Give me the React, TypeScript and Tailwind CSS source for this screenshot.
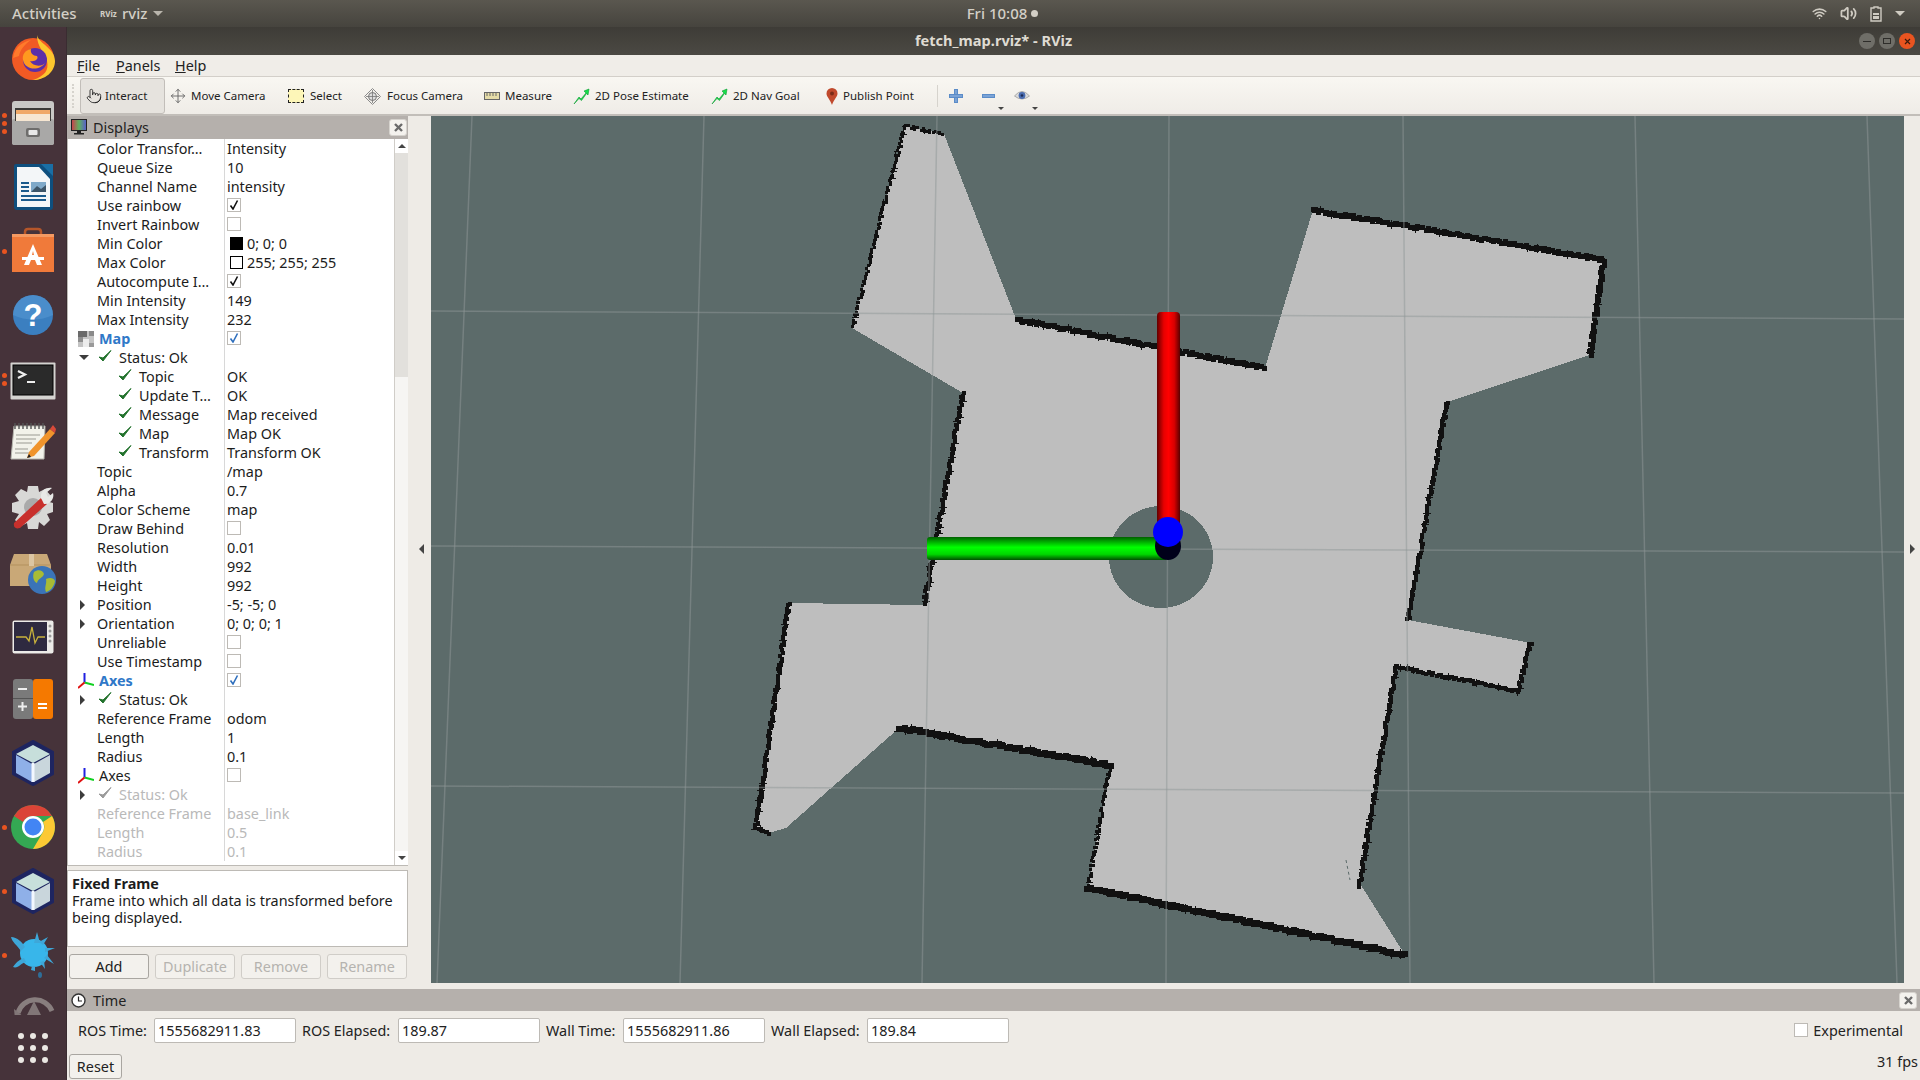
import { ReactNode } from "react";
import { Pointer, Move, Wifi, Volume2 } from "lucide-react";

type Row = {
  name: string;
  value?: string;
  indent?: 0 | 1 | 2;
  arrow?: "right" | "down";
  status?: boolean;
  icon?: "map" | "axes";
  blue?: boolean;
  off?: boolean;
  check?: boolean;
  swatch?: string;
};

const rows: Row[] = [
  { name: "Color Transfor…", value: "Intensity" },
  { name: "Queue Size", value: "10" },
  { name: "Channel Name", value: "intensity" },
  { name: "Use rainbow", check: true },
  { name: "Invert Rainbow", check: false },
  { name: "Min Color", value: "0; 0; 0", swatch: "bg-black" },
  { name: "Max Color", value: "255; 255; 255", swatch: "bg-white" },
  { name: "Autocompute I…", check: true },
  { name: "Min Intensity", value: "149" },
  { name: "Max Intensity", value: "232" },
  { name: "Map", icon: "map", blue: true, check: true },
  { name: "Status: Ok", indent: 1, arrow: "down", status: true },
  { name: "Topic", value: "OK", indent: 2, status: true },
  { name: "Update T…", value: "OK", indent: 2, status: true },
  { name: "Message", value: "Map received", indent: 2, status: true },
  { name: "Map", value: "Map OK", indent: 2, status: true },
  { name: "Transform", value: "Transform OK", indent: 2, status: true },
  { name: "Topic", value: "/map" },
  { name: "Alpha", value: "0.7" },
  { name: "Color Scheme", value: "map" },
  { name: "Draw Behind", check: false },
  { name: "Resolution", value: "0.01" },
  { name: "Width", value: "992" },
  { name: "Height", value: "992" },
  { name: "Position", value: "-5; -5; 0", arrow: "right" },
  { name: "Orientation", value: "0; 0; 0; 1", arrow: "right" },
  { name: "Unreliable", check: false },
  { name: "Use Timestamp", check: false },
  { name: "Axes", icon: "axes", blue: true, check: true },
  { name: "Status: Ok", indent: 1, arrow: "right", status: true },
  { name: "Reference Frame", value: "odom" },
  { name: "Length", value: "1" },
  { name: "Radius", value: "0.1" },
  { name: "Axes", icon: "axes", check: false },
  { name: "Status: Ok", indent: 1, arrow: "right", status: true, off: true },
  { name: "Reference Frame", value: "base_link", off: true },
  { name: "Length", value: "0.5", off: true },
  { name: "Radius", value: "0.1", off: true },
];

const floor: [number, number][] = [
  [905, 126], [944, 134], [1016, 319], [1265, 368], [1313, 210], [1604, 260], [1590, 355], [1447, 402],
  [1408, 620], [1531, 643], [1518, 691], [1396, 667], [1359, 882], [1405, 955], [1088, 888], [1110, 765],
  [899, 728], [786, 828], [769, 833], [756, 828], [789, 603], [924, 605], [963, 393], [852, 328],
];

// [points, wall thickness]
const walls: [[number, number][], number][] = [
  [[[853, 325], [905, 126], [944, 134]], 3],
  [[[1018, 320], [1265, 368]], 5],
  [[[1313, 210], [1604, 260], [1590, 355]], 5],
  [[[1447, 402], [1408, 620]], 4],
  [[[1531, 643], [1518, 691], [1396, 667], [1359, 887]], 4],
  [[[1405, 955], [1088, 888]], 6],
  [[[1088, 888], [1110, 765]], 3],
  [[[1110, 765], [899, 728]], 6],
  [[[769, 833], [756, 828], [789, 603]], 4],
  [[[963, 393], [924, 605]], 4],
];

// little pixel blocks along each wall, so it looks like an occupancy grid
const wallPath = () => {
  let d = "";
  let n = 7;
  for (const [w, t] of walls) {
    for (let i = 0; i < w.length - 1; i++) {
      const [x0, y0] = w[i];
      const [x1, y1] = w[i + 1];
      const len = Math.hypot(x1 - x0, y1 - y0);
      for (let s = 0; s < len; s += 2) {
        n = (n * 137 + 59) % 1009;
        const jx = (n % 3) - 1;
        const jy = ((n >> 2) % 3) - 1;
        const x = Math.round(x0 + ((x1 - x0) * s) / len + jx - t / 2);
        const y = Math.round(y0 + ((y1 - y0) * s) / len + jy - t / 2);
        d += `M${x} ${y}h${t}v${t}h-${t}z`;
        if (n % 11 === 0) d += `M${x - 2} ${y + t - 1}h${t + 4}v1h-${t + 4}z`;
        if (n % 13 === 0) d += `M${x + 1} ${y - 2}h1v${t + 4}h-1z`;
      }
    }
  }
  return d;
};

const Tick = ({ off }: { off?: boolean }) => (
  <svg width="14" height="14" viewBox="0 0 14 14">
    <path d="M1 8 L5 12 L13 1.5 L5 9 Z" fill={off ? "#9a9a9a" : "#22722c"} stroke={off ? "#9a9a9a" : "#22722c"} strokeWidth="1" strokeLinejoin="round" />
  </svg>
);

const MapIcon = () => (
  <svg width="16" height="16" viewBox="0 0 16 16" shapeRendering="crispEdges">
    <rect width="16" height="16" fill="#c4c4c4" />
    <rect width="9" height="6" fill="#6a6a6a" />
    <rect x="11" width="5" height="5" fill="#8a8a8a" />
    <rect y="6" width="5" height="5" fill="#8f8f8f" />
    <rect x="5" y="8" width="6" height="8" fill="#ededed" />
    <rect x="11" y="12" width="5" height="4" fill="#9a9a9a" />
  </svg>
);

const AxesIcon = () => (
  <svg width="16" height="16" viewBox="0 0 16 16">
    <path d="M6.5 9.5 V0" stroke="#2020e0" strokeWidth="2" />
    <path d="M6.5 9.5 L16 12" stroke="#10d020" strokeWidth="2" />
    <path d="M6.5 9.5 L0 15" stroke="#e01010" strokeWidth="2" />
  </svg>
);

const Check = ({ on, blue }: { on: boolean; blue?: boolean }) => (
  <div className="w-[14px] h-[14px] border border-[#bdbab5] bg-white flex items-center justify-center">
    {on && (
      <svg width="10" height="10" viewBox="0 0 10 10">
        <path d="M1.5 5.5 L4 9 L8.5 0.5" fill="none" stroke={blue ? "#2f6fbd" : "#111"} strokeWidth="1.6" />
      </svg>
    )}
  </div>
);

const TreeRow = ({ row }: { row: Row }) => {
  const indent = row.indent ?? 0;
  const textColor = row.off ? "text-[#b9b9b9]" : row.blue ? "text-[#2f78c8] font-bold" : "text-[#1c1c1c]";
  return (
    <div className="h-[19px] flex items-center">
      <div className="w-[156px] h-full flex items-center relative shrink-0">
        {row.arrow && (
          <div className="absolute left-[12px] top-[5px]">
            {row.arrow === "right" ? (
              <div className="w-0 h-0 border-y-[5px] border-y-transparent border-l-[5px] border-l-[#3c3c3c]" />
            ) : (
              <div className="mt-[2px] -ml-[1px] w-0 h-0 border-x-[5px] border-x-transparent border-t-[5px] border-t-[#3c3c3c]" />
            )}
          </div>
        )}
        {row.icon && (
          <div className="absolute left-[10px] top-[2px]">{row.icon === "map" ? <MapIcon /> : <AxesIcon />}</div>
        )}
        {row.status && (
          <div className={indent === 2 ? "absolute left-[50px] top-[1px]" : "absolute left-[30px] top-[1px]"}>
            <Tick off={row.off} />
          </div>
        )}
        <span
          className={`whitespace-nowrap ${textColor} ${
            indent === 2 ? "pl-[71px]" : indent === 1 ? "pl-[51px]" : row.icon ? "pl-[31px]" : "pl-[29px]"
          }`}
        >
          {row.name}
        </span>
      </div>
      <div className={`h-full flex items-center border-l border-[#d8d8d8] pl-[2px] flex-1 whitespace-nowrap ${row.off ? "text-[#b9b9b9]" : "text-[#1c1c1c]"}`}>
        {row.check !== undefined && (
          <div className="-mt-[2px]">
            <Check on={row.check} blue={row.blue} />
          </div>
        )}
        {row.swatch && <div className={`w-[13px] h-[13px] ml-[3px] mr-[4px] border border-black ${row.swatch}`} />}
        {row.value && <span>{row.value}</span>}
      </div>
    </div>
  );
};

const CloseBtn = () => (
  <div className="w-[18px] h-[17px] rounded-[3px] bg-[#f4f2ee] border border-[#d6d3ce] flex items-center justify-center">
    <svg width="9" height="9" viewBox="0 0 9 9">
      <path d="M1 1 L8 8 M8 1 L1 8" stroke="#6a6a6a" strokeWidth="2.4" />
    </svg>
  </div>
);

const Tool = ({ icon, label, cls }: { icon: ReactNode; label: string; cls: string }) => (
  <div className={`h-full flex items-center pl-[4px] shrink-0 whitespace-nowrap text-[11.5px] text-[#222] ${cls}`}>
    <div className="w-[17px] h-[17px] flex items-center justify-center shrink-0">{icon}</div>
    <span>{label}</span>
  </div>
);

const ArrowIcon = () => (
  <svg width="17" height="17" viewBox="0 0 17 17">
    <path d="M1 16 L6 9 L8 11 L13 5 L11 3 L16 1 L15 7 L13.5 5.5 L8.5 12.5 L6 10.5 Z" fill="#15e04a" stroke="#0c9a30" strokeWidth="0.6" />
  </svg>
);

const PanelBtn = ({ label, disabled }: { label: string; disabled?: boolean }) => (
  <div
    className={`w-[80px] h-[25px] rounded-[3px] border flex items-center justify-center bg-[#f3f1ed] ${
      disabled ? "border-[#d0cdc8] text-[#b5b3af]" : "border-[#a9a6a1] text-[#1c1c1c]"
    }`}
  >
    {label}
  </div>
);

const TimeField = ({ label, value, cls }: { label: string; value: string; cls: string }) => (
  <div className={`flex items-center shrink-0 ${cls}`}>
    <span className="flex-1 whitespace-nowrap text-[#222]">{label}</span>
    <div className="w-[142px] h-[25px] bg-white border border-[#bdbab5] rounded-[2px] flex items-center pl-[3px] text-[#222]">
      {value}
    </div>
  </div>
);

const Dots = ({ n }: { n: number }) => (
  <div className="absolute left-[2px] top-0 bottom-0 flex flex-col justify-center gap-[3px]">
    {Array.from({ length: n }).map((_, i) => (
      <div key={i} className="w-[5px] h-[5px] rounded-full bg-[#e95420]" />
    ))}
  </div>
);

const Cube = () => (
  <svg width="48" height="48" viewBox="0 0 48 48">
    <path d="M24 2 L44 13 V35 L24 46 L4 35 V13 Z" fill="#1e2560" stroke="#1e2560" strokeWidth="2" strokeLinejoin="round" />
    <path d="M24 6 L41 15 L24 24 L7 15 Z" fill="#c7dfdb" />
    <path d="M7 16 L23 25 V43 L7 34 Z" fill="#8fb0e8" />
    <path d="M25 25 L41 16 V34 L25 43 Z" fill="#c9d6dc" />
    <path d="M24 24 V43" stroke="#f2f7ff" strokeWidth="3" />
  </svg>
);

const dockIcons: { dots: number; svg: ReactNode }[] = [
  {
    dots: 0,
    svg: (
      <svg className="-translate-y-[1px]" width="48" height="48" viewBox="0 0 48 48">
        <circle cx="24" cy="25" r="21" fill="#f15a24" />
        <path d="M28 1 C30 10 46 14 46 27 C46 38 36 46 24 46 C36 42 40 36 38 27 C36 18 28 14 28 1 Z" fill="#fdc62e" />
        <circle cx="26" cy="26" r="12" fill="#5b2fa8" />
        <path d="M14 26 C16 36 30 38 37 28 C34 33 24 33 21 27 C26 28 30 25 28 22 C24 22 21 19 22 15 C16 16 13 21 14 26 Z" fill="#ff9a1f" />
        <path d="M4 24 C6 12 14 8 22 6 C16 10 11 16 10 22 Z" fill="#ff7a2b" />
      </svg>
    ),
  },
  {
    dots: 3,
    svg: (
      <svg width="44" height="46" viewBox="0 0 44 46">
        <rect x="1" y="1" width="42" height="44" rx="3" fill="#c9c8c6" />
        <rect x="1" y="19" width="42" height="26" rx="2" fill="#a9a8a7" />
        <rect x="4" y="8" width="36" height="13" fill="#3c3a38" />
        <rect x="5" y="10" width="34" height="4" fill="#f0a868" />
        <rect x="5" y="14" width="34" height="7" fill="#f6e6d2" />
        <rect x="15" y="28" width="14" height="9" rx="2" fill="#6e6d6c" />
        <rect x="17.5" y="30" width="9" height="5" rx="1" fill="#e8e8e8" />
      </svg>
    ),
  },
  {
    dots: 0,
    svg: (
      <svg width="42" height="48" viewBox="0 0 42 48">
        <path d="M2 3 Q2 1 4 1 H40 Q41 1 41 3 V44 Q41 47 38 47 H5 Q2 47 2 44 Z" fill="#0e4f7e" />
        <path d="M5 4 H27 L38 16 V44 H5 Z" fill="#f3f6f8" />
        <path d="M29 1 H41 V13 Z" fill="#1a6fa5" />
        <rect x="9" y="19" width="8" height="2" fill="#1a5a8c" />
        <rect x="9" y="23" width="8" height="2" fill="#1a5a8c" />
        <rect x="9" y="27" width="8" height="2" fill="#1a5a8c" />
        <rect x="19" y="19" width="15" height="10" fill="#7fa9c9" />
        <path d="M19 29 L25 23 L29 26 L34 22 V29 Z" fill="#3d5568" />
        <rect x="9" y="32" width="25" height="2" fill="#1a5a8c" />
        <rect x="9" y="36" width="25" height="2" fill="#1a5a8c" />
      </svg>
    ),
  },
  {
    dots: 1,
    svg: (
      <svg className="-translate-y-[1px]" width="44" height="46" viewBox="0 0 44 46">
        <path d="M14 12 V5 Q14 2 17 2 H27 Q30 2 30 5 V12" fill="none" stroke="#b5562a" strokeWidth="2.5" />
        <rect x="1" y="7" width="42" height="38" fill="#f07a3a" />
        <rect x="1" y="7" width="42" height="3" fill="#f59a62" />
        <path d="M22 17 L31 38 H26 L24 33 H20 L18 38 H13 Z M21 28 H23 L22 24 Z" fill="#fff" />
        <rect x="11" y="30" width="22" height="3" fill="#fff" />
      </svg>
    ),
  },
  {
    dots: 0,
    svg: (
      <svg width="42" height="42" viewBox="0 0 42 42">
        <circle cx="21" cy="21" r="20" fill="#3b7fc0" />
        <path d="M1 21 A20 20 0 0 1 41 21 Q21 30 1 21 Z" fill="#5a9bd5" opacity="0.5" />
        <text x="21" y="32" textAnchor="middle" fontFamily="Liberation Sans" fontWeight="700" fontSize="31" fill="#fff">?</text>
      </svg>
    ),
  },
  {
    dots: 2,
    svg: (
      <svg className="translate-y-[2px]" width="46" height="38" viewBox="0 0 46 38">
        <rect x="0.5" y="0.5" width="45" height="37" rx="1" fill="#d4d3d0" />
        <rect x="3" y="3" width="40" height="30" fill="#2a2a2a" stroke="#000" />
        <path d="M8 9 L15 12.5 L8 16" fill="none" stroke="#eee" strokeWidth="2.2" />
        <rect x="17" y="19" width="8" height="2" fill="#eee" />
      </svg>
    ),
  },
  {
    dots: 0,
    svg: (
      <svg width="46" height="44" viewBox="0 0 46 44">
        <path d="M4 5 H35 L34 38 H1 Z" fill="#f2f2ea" stroke="#b5b5ad" />
        <path d="M5 2 V8 M9 2 V8 M13 2 V8 M17 2 V8 M21 2 V8 M25 2 V8 M29 2 V8 M33 2 V8" stroke="#555" strokeWidth="1.4" />
        <path d="M6 14 H30 M6 18 H26 M6 22 H22 M5 28 H18 M5 32 H22" stroke="#9a9a92" strokeWidth="1.2" />
        <path d="M19 31 L40 8 L45 12 L24 35 L17 37 Z" fill="#f0942c" />
        <path d="M40 8 L43 4 L46 8 L45 12 Z" fill="#d84a3a" />
        <path d="M19 33 L17 37 L21 36 Z" fill="#222" />
      </svg>
    ),
  },
  {
    dots: 0,
    svg: (
      <svg width="46" height="46" viewBox="0 0 46 46">
        <path d="M18 2 H28 L29 8 L35 5 L41 12 L36 17 L43 19 V28 L37 30 L40 36 L34 42 L29 38 L28 45 H18 L17 39 L11 42 L5 36 L9 30 L2 28 V19 L9 17 L5 11 L11 5 L17 8 Z" fill="#d8d8d6" />
        <circle cx="23" cy="23" r="9" fill="#aaa" />
        <path d="M4 39 L31 14 L37 20 L10 44 Q3 46 4 39 Z" fill="#c8302c" />
        <path d="M31 14 C30 6 37 3 42 4 L36 9 L38 13 L43 9 C45 15 39 21 34 20 Z" fill="#e8e8e6" />
      </svg>
    ),
  },
  {
    dots: 0,
    svg: (
      <svg className="translate-y-[3px]" width="46" height="42" viewBox="0 0 46 42">
        <path d="M4 1 H37 L41 12 V33 H0 V12 Z" fill="#c9a877" />
        <path d="M0 12 H41" stroke="#b3915f" />
        <rect x="19" y="1" width="5" height="12" fill="#dcc6a3" />
        <circle cx="32" cy="27" r="14" fill="#3a74b8" />
        <path d="M24 19 C28 16 33 17 34 21 C33 25 28 25 27 30 C24 29 22 24 24 19 Z M36 26 C40 24 44 25 45 28 C44 34 40 38 36 39 C34 34 37 31 36 26 Z" fill="#a8bb35" />
      </svg>
    ),
  },
  {
    dots: 0,
    svg: (
      <svg className="translate-y-[2px]" width="42" height="34" viewBox="0 0 42 34">
        <rect x="0.5" y="0.5" width="41" height="33" rx="2" fill="#ecebe8" />
        <rect x="2" y="2" width="33" height="29" fill="#2e2a40" />
        <path d="M4 17 H14 L17 21 L20 7 L23 23 L26 17 H33" fill="none" stroke="#c7b13c" strokeWidth="1.3" />
        <circle cx="38" cy="6" r="1.5" fill="#999" />
        <circle cx="38" cy="11" r="1.5" fill="#999" />
        <circle cx="38" cy="16" r="1.5" fill="#999" />
        <circle cx="38" cy="21" r="1.5" fill="#999" />
      </svg>
    ),
  },
  {
    dots: 0,
    svg: (
      <svg width="40" height="40" viewBox="0 0 40 40">
        <rect width="20" height="40" fill="#7a7a7a" rx="3" />
        <rect x="20" width="20" height="40" fill="#f57900" rx="3" />
        <rect y="19" width="20" height="1" fill="#555" />
        <rect x="5" y="9" width="9" height="2" fill="#eee" />
        <path d="M9.5 23 V32 M5 27.5 H14" stroke="#eee" strokeWidth="2" />
        <path d="M25 25 H34 M25 29 H34" stroke="#fff" strokeWidth="2" />
      </svg>
    ),
  },
  { dots: 0, svg: <Cube /> },
  {
    dots: 1,
    svg: (
      <svg width="46" height="46" viewBox="0 0 46 46">
        <circle cx="23" cy="23" r="22" fill="#34a853" />
        <path d="M23 1 A22 22 0 0 1 42 12 H23 A11 11 0 0 0 13 18 L4 12 A22 22 0 0 1 23 1 Z" fill="#db4437" />
        <path d="M42 12 A22 22 0 0 1 23 45 L33 28 A11 11 0 0 0 33 18 Z" fill="#fcc934" />
        <circle cx="23" cy="23" r="11" fill="#fff" />
        <circle cx="23" cy="23" r="8.5" fill="#4285f4" />
      </svg>
    ),
  },
  { dots: 1, svg: <Cube /> },
  {
    dots: 1,
    svg: (
      <svg width="48" height="48" viewBox="0 0 48 48">
        <circle cx="25" cy="22" r="14" fill="#38b6ea" />
        <path d="M2 6 C8 6 14 12 16 16 L12 20 C8 14 3 11 2 6 Z M28 1 L31 12 L25 12 Z M39 6 L34 14 L30 11 Z M46 17 L36 21 L36 17 Z M45 33 L35 27 L38 24 Z M36 38 L31 31 L35 30 Z M4 36 C8 30 12 28 15 27 L17 31 C12 32 9 38 4 36 Z M23 35 L26 35 L26 40 L22 39 Z" fill="#3ea7d8" />
        <ellipse cx="31" cy="44" rx="2" ry="3" fill="#2e6e98" />
      </svg>
    ),
  },
];

export default function App() {
  return (
    <div className="w-[1920px] h-[1080px] overflow-hidden flex flex-col font-['Noto_Sans',sans-serif] text-[14.4px] bg-[#eeebe6]">
      {/* gnome top bar */}
      <div className="h-[27px] shrink-0 flex items-center bg-gradient-to-b from-[#5a574f] to-[#46443e] text-[#d3cfc6] font-medium text-[15px]">
        <div className="flex-1 flex items-center">
          <span className="pl-[12px] w-[100px]">Activities</span>
          <span className="text-[8px] font-bold w-[22px]">RViz</span>
          <span>rviz</span>
          <div className="ml-[6px] w-0 h-0 border-x-[5px] border-x-transparent border-t-[5px] border-t-[#b9b5ac]" />
        </div>
        <div className="flex items-center gap-[4px] ml-[100px]">
          <span>Fri 10:08</span>
          <div className="w-[7px] h-[7px] rounded-full bg-[#d3cfc6]" />
        </div>
        <div className="flex-1 flex items-center justify-end gap-[13px] pr-[15px]">
          <Wifi size={15} strokeWidth={2.5} className="text-[#cfcbc2]" />
          <Volume2 size={17} strokeWidth={2.5} className="text-[#cfcbc2]" />
          <svg width="12" height="16" viewBox="0 0 12 16">
            <path d="M4 1 H8 V2 H11 V15 H1 V2 H4 Z" fill="none" stroke="#cfcbc2" strokeWidth="1.4" />
            <rect x="3" y="7" width="6" height="2" fill="#cfcbc2" />
            <rect x="3" y="10" width="6" height="3" fill="#cfcbc2" />
          </svg>
          <div className="w-0 h-0 border-x-[5px] border-x-transparent border-t-[5px] border-t-[#cfcbc2]" />
        </div>
      </div>

      <div className="flex-1 flex min-h-0">
        {/* launcher */}
        <div className="w-[67px] shrink-0 bg-[#46333a] relative border-r border-[#3a2c31]">
          {dockIcons.map((d, i) => (
            <div key={i} className="h-[64px] flex items-center justify-center relative">
              {d.dots > 0 && <Dots n={d.dots} />}
              {d.svg}
            </div>
          ))}
          <div className="absolute left-[12px] top-[964px] w-[44px] h-[24px] overflow-hidden opacity-60">
            <svg width="44" height="44" viewBox="0 0 44 44">
              <path d="M6 22 A18 18 0 0 1 40 20" fill="none" stroke="#b5b0ac" strokeWidth="5" />
              <path d="M2 18 L12 26 L3 28 Z M22 10 L30 26 H14 Z" fill="#a9a4a0" />
            </svg>
          </div>
          <div className="absolute left-[18px] top-[1006px] grid grid-cols-3 gap-x-[6px] gap-y-[6px]">
            {Array.from({ length: 9 }).map((_, i) => (
              <div key={i} className="w-[6px] h-[6px] rounded-full bg-[#ebe8e3]" />
            ))}
          </div>
        </div>

        <div className="flex-1 flex flex-col min-w-0">
          {/* window title */}
          <div className="h-[28px] shrink-0 relative flex items-center justify-center bg-gradient-to-b from-[#3e3c37] to-[#4b4943] text-[#dfdbd2] font-bold text-[14.6px]">
            <span>fetch_map.rviz* - RViz</span>
            <div className="absolute right-[5px] top-[6px] flex gap-[4px]">
              <div className="w-[16px] h-[16px] rounded-full bg-[#6f6e68] flex items-center justify-center">
                <div className="w-[8px] h-[1px] bg-[#2e2d2a]" />
              </div>
              <div className="w-[16px] h-[16px] rounded-full bg-[#6f6e68] flex items-center justify-center">
                <div className="w-[8px] h-[6px] border border-[#2e2d2a]" />
              </div>
              <div className="w-[16px] h-[16px] rounded-full bg-[#e95420] flex items-center justify-center">
                <svg width="7" height="7" viewBox="0 0 7 7">
                  <path d="M1 1 L6 6 M6 1 L1 6" stroke="#3a1a0c" strokeWidth="1.2" />
                </svg>
              </div>
            </div>
          </div>

          {/* menu */}
          <div className="h-[22px] shrink-0 flex items-center bg-[#f0ede8] border-b border-[#d3cfc9] text-[#222]">
            <span className="ml-[10px] w-[39px]"><span className="underline">F</span>ile</span>
            <span className="w-[59px]"><span className="underline">P</span>anels</span>
            <span><span className="underline">H</span>elp</span>
          </div>

          {/* toolbar */}
          <div className="h-[39px] shrink-0 flex items-center bg-gradient-to-b from-[#f9f7f2] to-[#efece7] border-b-2 border-[#c2beb9] pt-[1px]">
            <div className="w-[13px] h-[24px] ml-[5px] border-l-2 border-dotted border-[#d6d3cd] shrink-0 -mr-[5px]" />
            <Tool
              cls="gap-[3px] w-[85px] h-[30px] rounded-[3px] bg-[#e6e3de] border border-[#c2beb9]"
              label="Interact"
              icon={<Pointer size={16} strokeWidth={1.3} className="text-[#222]" />}
            />
            <Tool cls="gap-[5px] w-[118px]" label="Move Camera" icon={<Move size={16} strokeWidth={1.4} className="text-[#666]" />} />
            <Tool
              cls="gap-[6px] w-[77px]"
              label="Select"
              icon={<div className="w-[16px] h-[14px] bg-[#fdf6b8] border border-dashed border-[#222]" />}
            />
            <Tool
              cls="gap-[6px] w-[119px]"
              label="Focus Camera"
              icon={
                <svg width="17" height="17" viewBox="0 0 17 17">
                  <path d="M8.5 0.5 L16.5 8.5 L8.5 16.5 L0.5 8.5 Z" fill="none" stroke="#8a8a8a" />
                  <circle cx="8.5" cy="8.5" r="4" fill="#dedede" stroke="#777" />
                  <path d="M8.5 2 V15 M2 8.5 H15" stroke="#777" strokeWidth="0.8" />
                </svg>
              }
            />
            <Tool
              cls="gap-[5px] w-[90px]"
              label="Measure"
              icon={
                <svg width="16" height="8" viewBox="0 0 16 8">
                  <rect x="0.5" y="0.5" width="15" height="7" fill="#e5dca8" stroke="#666" />
                  <path d="M3 1 V4 M6 1 V4 M9 1 V4 M12 1 V4" stroke="#666" />
                </svg>
              }
            />
            <Tool cls="gap-[5px] w-[138px]" label="2D Pose Estimate" icon={<ArrowIcon />} />
            <Tool cls="gap-[5px] w-[112px]" label="2D Nav Goal" icon={<ArrowIcon />} />
            <Tool
              cls="gap-[3px] w-[112px]"
              label="Publish Point"
              icon={
                <svg width="12" height="17" viewBox="0 0 12 17">
                  <path d="M6 17 C4 11 0.5 9 0.5 5.5 A5.5 5.5 0 0 1 11.5 5.5 C11.5 9 8 11 6 17 Z" fill="#c0492c" />
                  <circle cx="6" cy="5.5" r="2" fill="#7a2c18" />
                </svg>
              }
            />
            <div className="w-[1px] h-[22px] ml-[6px] bg-[#d6d3cd]" />
            <div className="ml-[11px] w-[14px] h-[14px] relative">
              <div className="absolute left-[5px] top-0 w-[4px] h-[14px] bg-[#7ba3d6] border border-[#5b8cc8]" />
              <div className="absolute left-0 top-[5px] w-[14px] h-[4px] bg-[#7ba3d6] border border-[#5b8cc8]" />
            </div>
            <div className="ml-[19px] w-[13px] h-[4px] bg-[#7ba3d6] border border-[#5b8cc8]" />
            <div className="self-end mb-[4px] ml-[3px] w-0 h-0 border-x-[3px] border-x-transparent border-t-[3px] border-t-[#444]" />
            <svg className="ml-[10px]" width="16" height="12" viewBox="0 0 16 12">
              <path d="M0.5 6 Q8 -3 15.5 6 Q8 12 0.5 6 Z" fill="#dcdcdc" stroke="#aaa" />
              <circle cx="8" cy="5.5" r="3.4" fill="#4a6cb0" />
              <circle cx="8" cy="5.5" r="1.3" fill="#1c2b55" />
            </svg>
            <div className="self-end mb-[4px] ml-[2px] w-0 h-0 border-x-[3px] border-x-transparent border-t-[3px] border-t-[#444]" />
          </div>

          {/* left dock, view */}
          <div className="h-[873px] shrink-0 flex">
            <div className="w-[341px] shrink-0 flex flex-col">
              <div className="h-[23px] shrink-0 bg-[#b5b0ac] flex items-center pl-[4px] pr-[1px] justify-between text-[#222]">
                <div className="flex items-center gap-[6px]">
                  <svg width="16" height="16" viewBox="0 0 16 16">
                    <defs>
                      <linearGradient id="screen" x1="0" x2="1" y1="0" y2="0">
                        <stop offset="0" stopColor="#d03a4a" />
                        <stop offset="0.5" stopColor="#5fb060" />
                        <stop offset="1" stopColor="#5a5ad0" />
                      </linearGradient>
                    </defs>
                    <rect x="0.5" y="0.5" width="15" height="11" fill="url(#screen)" stroke="#222" />
                    <rect x="6" y="12" width="4" height="2" fill="#222" />
                    <rect x="3" y="14" width="10" height="1.5" fill="#222" />
                  </svg>
                  <span>Displays</span>
                </div>
                <CloseBtn />
              </div>

              <div className="h-[727px] shrink-0 flex bg-white border-l border-b border-[#bdbab5] overflow-hidden">
                <div className="flex-1 min-w-0">
                  {rows.map((r, i) => (
                    <TreeRow key={i} row={r} />
                  ))}
                </div>
                <div className="w-[14px] shrink-0 flex flex-col border-l border-[#d0cdc8]">
                  <div className="h-[14px] bg-white flex items-center justify-center">
                    <div className="w-0 h-0 border-x-[4px] border-x-transparent border-b-[4px] border-b-[#444]" />
                  </div>
                  <div className="h-[224px] bg-[#e2e0dc]" />
                  <div className="flex-1 bg-[#f6f5f3]" />
                  <div className="h-[14px] bg-white flex items-center justify-center">
                    <div className="w-0 h-0 border-x-[4px] border-x-transparent border-t-[4px] border-t-[#444]" />
                  </div>
                </div>
              </div>

              <div className="h-[4px] shrink-0" />

              <div className="h-[77px] shrink-0 bg-white border border-[#bdbab5] px-[4px] leading-[17px] pt-[4px] text-[#1c1c1c]">
                <div className="font-bold">Fixed Frame</div>
                <div>Frame into which all data is transformed before being displayed.</div>
              </div>

              <div className="flex gap-[6px] pl-[2px] mt-[7px]">
                <PanelBtn label="Add" />
                <PanelBtn label="Duplicate" disabled />
                <PanelBtn label="Remove" disabled />
                <PanelBtn label="Rename" disabled />
              </div>
            </div>

            <div className="w-[23px] shrink-0 flex items-center justify-center pb-[8px] pl-[3px]">
              <div className="w-0 h-0 border-y-[5px] border-y-transparent border-r-[5px] border-r-[#444]" />
            </div>

            <div className="w-[1473px] shrink-0 h-[867px] bg-[#5c6b6a]">
              <svg width="1473" height="867" viewBox="431 116 1473 867" className="block">
                <defs>
                  <linearGradient id="redAxis" x1="0" x2="1" y1="0" y2="0">
                    <stop offset="0" stopColor="#600000" />
                    <stop offset="0.15" stopColor="#a80000" />
                    <stop offset="0.3" stopColor="#e80000" />
                    <stop offset="0.5" stopColor="#ff0000" />
                    <stop offset="0.75" stopColor="#d80000" />
                    <stop offset="1" stopColor="#5a0000" />
                  </linearGradient>
                  <linearGradient id="greenAxis" x1="0" x2="0" y1="0" y2="1">
                    <stop offset="0" stopColor="#006000" />
                    <stop offset="0.2" stopColor="#00a800" />
                    <stop offset="0.45" stopColor="#00ff00" />
                    <stop offset="0.75" stopColor="#00d800" />
                    <stop offset="1" stopColor="#005000" />
                  </linearGradient>
                </defs>
                <polygon points={floor.map((p) => p.join(",")).join(" ")} fill="#bebebe" shapeRendering="crispEdges" />
                <ellipse cx="1161" cy="557" rx="52" ry="51" fill="#5c6b6a" shapeRendering="crispEdges" />
                <path d={wallPath()} fill="#111" shapeRendering="crispEdges" />
                <path d="M1346 860 L1350 880" stroke="#5c6b6a" strokeWidth="1" strokeDasharray="3 3" />
                <g stroke="#8f9797" strokeOpacity="0.5" strokeWidth="1.5">
                  <path d="M472 116 L437 983" />
                  <path d="M704 116 L680 983" />
                  <path d="M937 116 L922 983" />
                  <path d="M1169 116 L1166 983" />
                  <path d="M1403 116 L1410 983" />
                  <path d="M1635 116 L1654 983" />
                  <path d="M1867 116 L1897 983" />
                  <path d="M431 311 L1904 319" />
                  <path d="M431 546 L1904 552" />
                  <path d="M431 786 L1904 793" />
                </g>
                <rect x="1157" y="312" width="23" height="225" rx="4" fill="url(#redAxis)" />
                <rect x="927" y="537" width="240" height="23" rx="3" fill="url(#greenAxis)" />
                <ellipse cx="1168" cy="546" rx="13" ry="14" fill="#00001a" />
                <circle cx="1168" cy="532" r="15" fill="#0000ff" />
              </svg>
            </div>

            <div className="flex-1 flex items-center justify-center pb-[8px]">
              <div className="w-0 h-0 border-y-[5px] border-y-transparent border-l-[5px] border-l-[#444]" />
            </div>
          </div>

          {/* time panel */}
          <div className="flex-1 flex flex-col bg-[#eeebe6]">
            <div className="h-[22px] shrink-0 bg-[#b5b0ac] flex items-center justify-between pl-[4px] pr-[3px] text-[#222] pt-[1px]">
              <div className="flex items-center gap-[7px]">
                <svg width="15" height="15" viewBox="0 0 15 15">
                  <circle cx="7.5" cy="7.5" r="6.5" fill="#fff" stroke="#333" strokeWidth="1.4" />
                  <path d="M7.5 3.5 V8 H11" fill="none" stroke="#222" strokeWidth="1.2" />
                </svg>
                <span>Time</span>
              </div>
              <CloseBtn />
            </div>
            <div className="h-[25px] mt-[7px] flex items-center pl-[11px] shrink-0">
              <TimeField cls="w-[218px]" label="ROS Time:" value="1555682911.83" />
              <TimeField cls="w-[238px] ml-[6px]" label="ROS Elapsed:" value="189.87" />
              <TimeField cls="w-[219px] ml-[6px]" label="Wall Time:" value="1555682911.86" />
              <TimeField cls="w-[238px] ml-[6px]" label="Wall Elapsed:" value="189.84" />
              <div className="flex-1 flex items-center justify-end pr-[17px] gap-[5px] text-[#222]">
                <Check on={false} />
                <span>Experimental</span>
              </div>
            </div>
            <div className="flex items-center justify-between mt-[11px] pl-[2px] pr-[2px] text-[#222]">
              <div className="w-[53px] h-[25px] rounded-[3px] border border-[#a9a6a1] bg-[#f3f1ed] flex items-center justify-center">
                Reset
              </div>
              <span className="-mt-[10px]">31 fps</span>
            </div>
          </div>
        </div>
      </div>
    </div>
  );
}
